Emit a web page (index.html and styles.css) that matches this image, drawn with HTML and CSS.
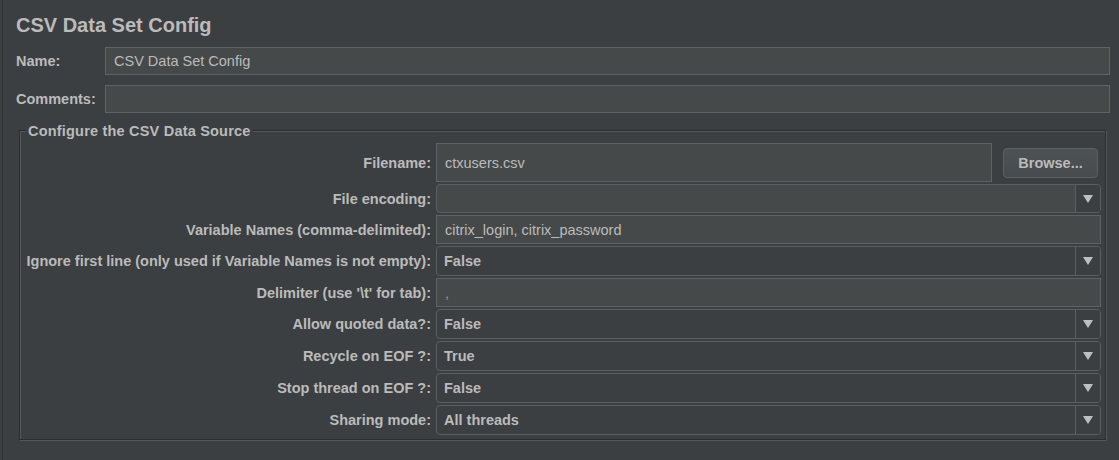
FILE: index.html
```html
<!DOCTYPE html>
<html lang="en">
<head>
<meta charset="utf-8">
<title>CSV Data Set Config</title>
<link rel="stylesheet" href="styles.css">
</head>
<body>
<div class="panel">
  <h1 class="title">CSV Data Set Config</h1>
  <div class="named">
    <label class="lbl">Name:</label>
    <div class="field">CSV Data Set Config</div>
    <label class="lbl">Comments:</label>
    <div class="field"></div>
  </div>
  <div class="group">
    <span class="group-title">Configure the CSV Data Source</span>
    <div class="form">
      <label class="flbl">Filename:</label>
      <div class="file-row">
        <div class="field file-field">ctxusers.csv</div>
        <button class="btn">Browse...</button>
      </div>

      <label class="flbl">File encoding:</label>
      <div class="combo combo-edit"><span class="cval"></span><span class="arrow"><span class="tri"></span></span></div>

      <label class="flbl">Variable Names (comma-delimited):</label>
      <div class="field">citrix_login, citrix_password</div>

      <label class="flbl">Ignore first line (only used if Variable Names is not empty):</label>
      <div class="combo"><span class="cval">False</span><span class="arrow"><span class="tri"></span></span></div>

      <label class="flbl">Delimiter (use '\t' for tab):</label>
      <div class="field delim">,</div>

      <label class="flbl">Allow quoted data?:</label>
      <div class="combo"><span class="cval">False</span><span class="arrow"><span class="tri"></span></span></div>

      <label class="flbl">Recycle on EOF ?:</label>
      <div class="combo"><span class="cval">True</span><span class="arrow"><span class="tri"></span></span></div>

      <label class="flbl">Stop thread on EOF ?:</label>
      <div class="combo"><span class="cval">False</span><span class="arrow"><span class="tri"></span></span></div>

      <label class="flbl">Sharing mode:</label>
      <div class="combo"><span class="cval">All threads</span><span class="arrow"><span class="tri"></span></span></div>
    </div>
  </div>
</div>
</body>
</html>
```

FILE: styles.css
```css
html, body {
  margin: 0;
  padding: 0;
  background: #3c3f41;
}

body {
  font-family: "Liberation Sans", Arial, sans-serif;
  color: #bbbbbb;
  font-size: 14.5px;
}

.panel {
  box-sizing: border-box;
  min-height: 460px;
  height: 460px;
  margin-left: 2px;
  border-left: 1px solid #2f3133;
  padding: 13px 9px 0 13px;
}

.title {
  margin: 0;
  font-size: 20px;
  line-height: 24px;
  font-weight: bold;
  color: #bbbbbb;
}

.named {
  margin-top: 10px;
  display: grid;
  grid-template-columns: 89px 1fr;
  grid-auto-rows: 28px;
  row-gap: 10px;
  align-items: center;
}

.lbl {
  font-weight: bold;
}

.field {
  box-sizing: border-box;
  height: 100%;
  background: #45494a;
  border: 1px solid #5f6365;
  padding: 0 8px;
  display: flex;
  align-items: center;
  white-space: nowrap;
}

.group {
  position: relative;
  margin: 17px 4px 0 3px;
  border: 1px solid #2b2d2e;
  box-shadow: inset 1px 1px 0 #55585a, 1px 1px 0 #55585a;
  padding: 12px 4px 4px 3px;
}

.group-title {
  position: absolute;
  left: 6px;
  top: -8px;
  line-height: 16px;
  padding: 0 2px;
  background: #3c3f41;
  font-weight: bold;
  letter-spacing: 0.2px;
}

.form {
  display: grid;
  grid-template-columns: 408px 1fr;
  grid-template-rows: 39px 29px 29px 30px 29px 30px 30px 30px 30px;
  column-gap: 5px;
  row-gap: 2px;
  align-items: center;
}

.flbl {
  justify-self: end;
  font-weight: bold;
  white-space: nowrap;
}

.file-row {
  height: 100%;
  display: flex;
  align-items: center;
}

.file-field {
  flex: 1;
  padding-left: 8px;
}

.btn {
  box-sizing: border-box;
  width: 95px;
  height: 30px;
  margin-left: 11px;
  margin-right: 3px;
  border: 1px solid #5c6062;
  border-radius: 4px;
  background: linear-gradient(#4d5254, #474b4d);
  color: #bbbbbb;
  font-family: "Liberation Sans", Arial, sans-serif;
  font-size: 14.5px;
  font-weight: bold;
  padding: 0;
}

.combo {
  box-sizing: border-box;
  height: 100%;
  display: flex;
  border: 1px solid #5b5f61;
  border-radius: 4px;
  background: #3c3f41;
}

.combo-edit {
  background: #45494a;
}

.cval {
  flex: 1;
  display: flex;
  align-items: center;
  padding-left: 7px;
  font-weight: bold;
  white-space: nowrap;
}

.arrow {
  width: 24px;
  border-left: 1px solid #5b5f61;
  display: flex;
  align-items: center;
  justify-content: center;
  background: #3c3f41;
  border-radius: 0 3px 3px 0;
}

.tri {
  width: 0;
  height: 0;
  border-left: 5px solid transparent;
  border-right: 5px solid transparent;
  border-top: 8px solid #bfbfbf;
}

.delim {
  color: #8a9aa8;
}
```
